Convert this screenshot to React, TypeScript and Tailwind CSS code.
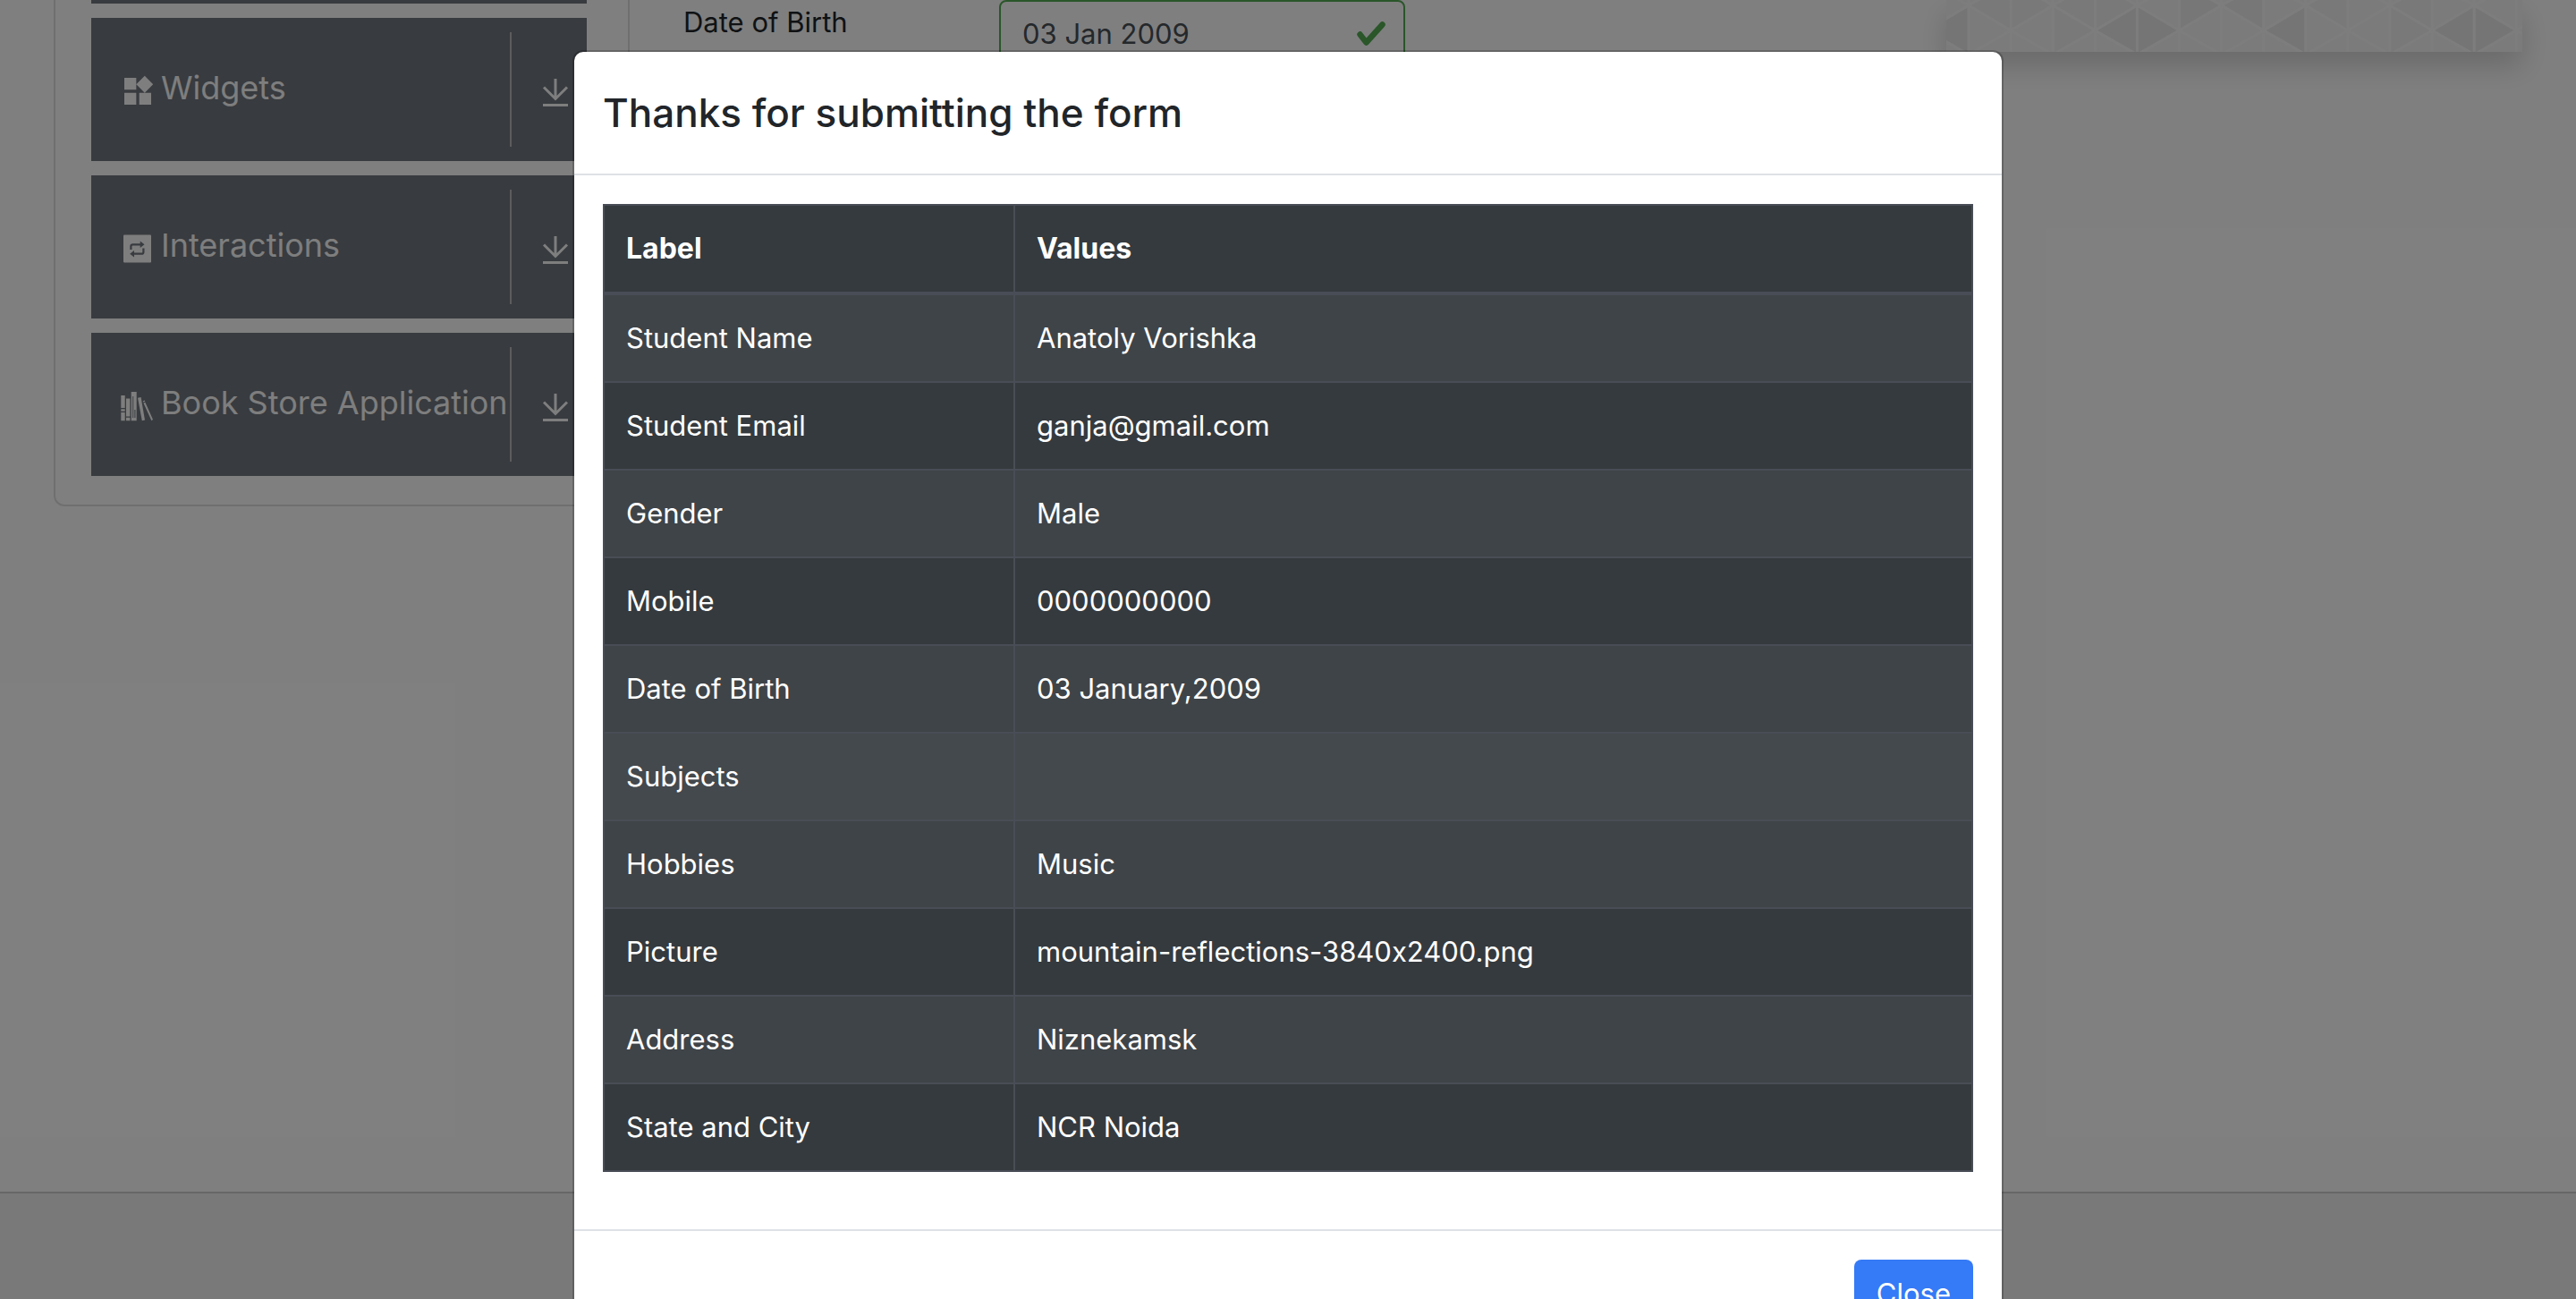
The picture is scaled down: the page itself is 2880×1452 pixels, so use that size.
import React from "react";
import { MdWidgets } from "react-icons/md";

const rows: { label: string; value: string; active?: boolean }[] = [
  { label: "Student Name", value: "Anatoly Vorishka" },
  { label: "Student Email", value: "ganja@gmail.com" },
  { label: "Gender", value: "Male" },
  { label: "Mobile", value: "0000000000" },
  { label: "Date of Birth", value: "03 January,2009" },
  { label: "Subjects", value: "", active: true },
  { label: "Hobbies", value: "Music" },
  { label: "Picture", value: "mountain-reflections-3840x2400.png" },
  { label: "Address", value: "Niznekamsk" },
  { label: "State and City", value: "NCR Noida" },
];

function RepeatIcon() {
  return (
    <svg viewBox="0 0 40 40" className="mt-2 size-10 shrink-0" aria-hidden="true">
      <rect x="4" y="4.5" width="31" height="31" rx="1" fill="currentColor" />
      <g fill="none" stroke="#70767e" strokeWidth="2.2">
        <path d="M12.4 21v-3.700a2 2 0 0 1 2-2H24" />
        <path d="M26.400 19.500v4.200a2 2 0 0 1-2 2H15" />
      </g>
      <path d="M22.700 11.500l4.800 3.800-4.800 3.800zM16 21.900l-4.800 3.800 4.800 3.800z" fill="#70767e" />
    </svg>
  );
}

function BooksIcon() {
  return (
    <svg viewBox="0 0 40 40" className="mt-2 size-10 shrink-0" fill="currentColor" aria-hidden="true">
      <path d="M1.300 8h4.400v14H1.300zM1.300 23.300h4.400v2.400H1.300zM1.300 27h4.400v9.300H1.300z" />
      <path d="M7 11.500h4.400v20H7zM7 32.700h4.400v3.600H7z" />
      <path fillRule="evenodd" d="M12.700 4h6v32.300h-6zM14.300 9v24h.900V9zM16.400 24v9h1v-9z" />
      <path d="M20 10.800l3.600-.700L28 35.500l-3.200.800z" />
      <path d="M25.800 14.300l2-.700 .400 1.200-2 .700zM26.400 16.500l2-.800L37 35l-1.600 1.200z" />
    </svg>
  );
}

function DownloadIcon() {
  return (
    <svg viewBox="0 0 32 32" className="size-8" fill="none" stroke="currentColor" strokeWidth="3" aria-hidden="true">
      <path d="M16 0v22M3 9.500l13 13 13-13M2 29.500h28" />
    </svg>
  );
}

function CheckIcon() {
  return (
    <svg viewBox="0 0 32 28" className="h-7 w-8 shrink-0" fill="none" stroke="#54ac54" strokeWidth="6.5" strokeLinecap="round" strokeLinejoin="round" aria-hidden="true">
      <path d="M3.500 14.500l7 9L28.500 3.500" />
    </svg>
  );
}

function TriangleBanner() {
  const columns = Array.from({ length: 16 }, (_, k) => k - 1);
  const x = (k: number) => 25 + 47.1 * k;
  const fan = (k: number) =>
    (k % 2 === 0
      ? [[6, 34], [6, -21], [61, 34], [61, 89]]
      : [[34, 6], [34, 61], [-21, 6], [89, 61]]
    )
      .map(([from, to]) => `M${x(k)} ${from}L${x(k + 1)} ${to}`)
      .join("");
  return (
    <svg viewBox="0 0 644 58" preserveAspectRatio="xMinYMax slice" className="h-[58px] w-full" aria-hidden="true">
      <rect width="644" height="58" fill="#f6f6f6" />
      <path
        d="M25 6L72 -21V34zM120 6L72 -21V34zM119 6L166 -21V34zM119 6L166 34L119 61zM213 6L166 34V-21zM402 6L449 -21V34zM496 6L543 -21V34zM496 6L543 34L496 61z"
        fill="#f2f2f2"
      />
      <path d="M-22 34L25 6V61zM166 34L213 6L260 34L213 61zM355 34L402 6V61zM543 34L590 6L637 34L590 61z" fill="#ebebeb" />
      <path d="M307 6L260 -21V34zM307 6L354 -21V34z" fill="#efefef" />
      <g stroke="#fbfbfb" strokeWidth="3" fill="none">
        {columns.map((k) => (
          <path key={k} d={`M${x(k)} 0V58${fan(k)}`} />
        ))}
      </g>
    </svg>
  );
}

function MenuItem({ icon, label }: { icon: React.ReactNode; label: string }) {
  return (
    <button type="button" className="flex h-40 w-full items-center bg-[#70767e] text-left text-4xl text-[#fcfcfc]">
      <span className="flex h-32 min-w-0 flex-1 items-center gap-1.5 whitespace-nowrap border-r-2 border-[#b8b8b8] pb-1 pl-8">
        {icon}
        {label}
      </span>
      <span className="flex w-21 justify-center pl-3.5 pt-2">
        <DownloadIcon />
      </span>
    </button>
  );
}

export default function App() {
  return (
    <div className="relative h-screen overflow-hidden bg-white font-['Inter',sans-serif] text-[31px] text-[#212529] [font-feature-settings:'calt'_0]">
      <div className="flex h-full flex-col">
        <div className="flex flex-1 items-start px-15">
          <nav className="w-[644px] shrink-0 rounded-b-xl border-x-2 border-b-2 border-[#dfdfdf] pb-8 pl-10 pr-[46px]">
            <div className="h-1 bg-[#70767e]" />
            <div className="mt-4 flex flex-col gap-4">
              <MenuItem icon={<MdWidgets className="mt-2 size-10 shrink-0" />} label="Widgets" />
              <MenuItem icon={<RepeatIcon />} label="Interactions" />
              <MenuItem icon={<BooksIcon />} label="Book Store Application" />
            </div>
          </nav>
          <form className="flex flex-1 items-start pl-15">
            <label htmlFor="dob" className="w-[353px] leading-[50px]">
              Date of Birth
            </label>
            <div className="flex h-19 w-[454px] items-center rounded-lg border-2 border-[#54ac54] pl-6 pr-5">
              <input id="dob" type="text" defaultValue="03 Jan 2009" className="min-w-0 flex-1 bg-transparent text-[#495057] outline-none" />
              <CheckIcon />
            </div>
          </form>
          <aside className="w-[644px] shrink-0 shadow-[0_16px_32px_rgba(0,0,0,0.17)]">
            <TriangleBanner />
          </aside>
        </div>
        <footer className="h-30 border-t-2 border-[#cfcfcf] bg-[#f3f3f3]" />
      </div>
      <div className="absolute inset-0 flex items-start justify-center bg-black/50 pt-14">
        <div role="dialog" aria-modal="true" aria-labelledby="dialog-title" className="w-[1600px] rounded-xl border-2 border-black/20 bg-white bg-clip-padding">
          <header className="border-b-2 border-[#dee2e6] p-8">
            <h1 id="dialog-title" className="text-[44px] font-medium leading-[72px]">
              Thanks for submitting the form
            </h1>
          </header>
          <div className="p-8">
            <table className="mb-8 w-full table-fixed border-collapse border-2 border-[#484d56] bg-[#353a3e] text-left leading-12 text-white">
              <thead>
                <tr className="border-b-4 border-[#484d56] text-[32px]">
                  <th className="w-[30%] border-r-2 border-[#484d56] p-6 font-bold">Label</th>
                  <th className="p-6 font-bold">Values</th>
                </tr>
              </thead>
              <tbody>
                {rows.map(({ label, value, active }) => (
                  <tr
                    key={label}
                    className={`border-b-2 border-[#484d56] ${active ? "bg-[#44494d]" : "odd:bg-[#3f4448]"}`}
                  >
                    <td className="border-r-2 border-[#484d56] p-6">{label}</td>
                    <td className="p-6">{value}</td>
                  </tr>
                ))}
              </tbody>
            </table>
          </div>
          <footer className="flex justify-end border-t-2 border-[#dee2e6] p-8">
            <button type="button" className="h-19 rounded-lg bg-[#357af6] px-[25px] text-white">
              Close
            </button>
          </footer>
        </div>
      </div>
    </div>
  );
}
